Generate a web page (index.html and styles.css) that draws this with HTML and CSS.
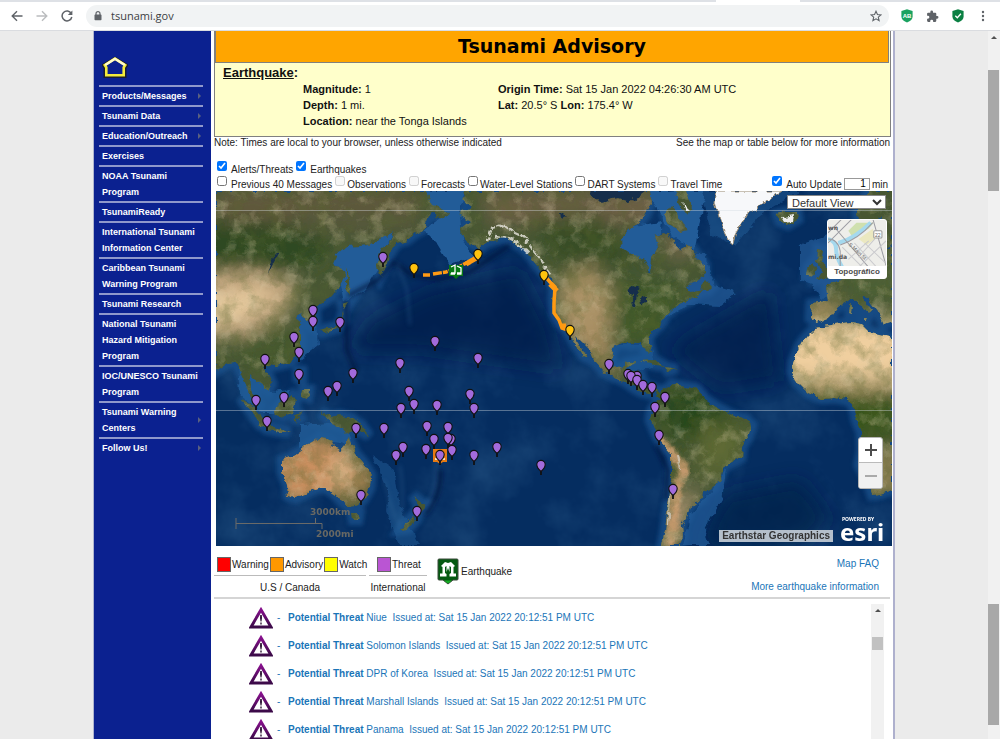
FILE: index.html
```html
<!DOCTYPE html>
<html lang="en">
<head>
<meta charset="utf-8">
<title>Tsunami.gov</title>
<link rel="stylesheet" href="styles.css">
</head>
<body>
<header class="chrome">
  <div class="tabstrip"><span class="tab"></span></div>
  <div class="toolbar">
    <button class="tool" aria-label="Back"><svg width="12" height="12" viewBox="0 0 12 12"><path d="M11.500 6H1.500M6 1.200L1.200 6L6 10.800" fill="none" stroke="#5f6368" stroke-width="1.400"/></svg></button>
    <button class="tool" aria-label="Forward"><svg width="12" height="12" viewBox="0 0 12 12"><path d="M.5 6H10.500M6 1.200L10.800 6L6 10.800" fill="none" stroke="#babcbe" stroke-width="1.400"/></svg></button>
    <button class="tool" aria-label="Reload"><svg width="12" height="12" viewBox="0 0 12 12"><path d="M10.300 3.600A4.900 4.900 0 1 0 10.800 7" fill="none" stroke="#5f6368" stroke-width="1.500"/><path d="M11.400 .4V5H6.800z" fill="#5f6368"/></svg></button>
    <div class="address">
      <svg width="8" height="10" viewBox="0 0 8 10"><path d="M2 4V2.700a2 2 0 0 1 4 0V4" fill="none" stroke="#5f6368" stroke-width="1.200"/><rect x=".5" y="3.600" width="7" height="5.600" rx=".8" fill="#5f6368"/></svg>
      <input class="url" type="text" value="tsunami.gov" aria-label="Address">
      <button class="tool" aria-label="Bookmark"><svg width="12" height="12" viewBox="0 0 24 24"><path d="M12 2.500l2.900 6.600 7.100.6-5.400 4.700 1.600 7L12 17.700 5.800 21.400l1.600-7L2 9.700l7.100-.6z" fill="none" stroke="#5f6368" stroke-width="2.200"/></svg></button>
    </div>
    <div class="extensions">
      <button class="tool" aria-label="AdBlock"><svg width="12" height="14" viewBox="0 0 12 14"><path d="M6 .3L11.600 2V7.500Q11.600 11.300 6 13.500Q.4 11.300.4 7.500V2z" fill="#1aa260"/><text x="6" y="8.500" text-anchor="middle" class="ab">AB</text></svg></button>
      <button class="tool" aria-label="Extensions"><svg width="13" height="13" viewBox="0 0 24 24"><path d="M20.500 11H19V7a2 2 0 0 0-2-2h-4V3.500a2.500 2.500 0 0 0-5 0V5H4a2 2 0 0 0-2 2v3.800h1.500a2.700 2.700 0 0 1 0 5.400H2V20a2 2 0 0 0 2 2h3.800v-1.500a2.700 2.700 0 0 1 5.400 0V22H17a2 2 0 0 0 2-2v-4h1.500a2.500 2.500 0 0 0 0-5z" fill="#5f6368"/></svg></button>
      <button class="tool" aria-label="Protection"><svg width="12" height="14" viewBox="0 0 12 14"><path d="M6 .3L11.600 2V7.500Q11.600 11.300 6 13.500Q.4 11.300.4 7.500V2z" fill="#0b8043"/><path d="M3.300 6.700L5.300 8.700L8.900 4.700" fill="none" stroke="#fff" stroke-width="1.300"/></svg></button>
      <button class="tool" aria-label="Menu"><svg width="4" height="12" viewBox="0 0 4 12"><g fill="#5f6368"><circle cx="2" cy="2" r="1.200"/><circle cx="2" cy="6" r="1.200"/><circle cx="2" cy="10" r="1.200"/></g></svg></button>
    </div>
  </div>
</header>
<div class="viewport">
  <div class="page">
    <nav class="sidebar">
      <a class="home" href="#" aria-label="Home"><svg width="26" height="22" viewBox="0 0 26 22"><path d="M13 3L24 9.500L22.500 12V20H3.500V12L2 9.500z" fill="none" stroke="#1b1f30" stroke-width="4"/><path d="M13 2.600L23.200 9.200L21.700 11.500V19.200H4.300V11.500L2.800 9.200z" fill="#0b2190" stroke="#f4ec3c" stroke-width="2.600"/><path d="M3.200 9L13 2.700L22.800 9" fill="none" stroke="#fffbd0" stroke-width="2.200"/></svg></a>
      <ul class="menu">
        <li><a class="sub" href="#">Products/Messages</a></li>
        <li><a class="sub" href="#">Tsunami Data</a></li>
        <li><a class="sub" href="#">Education/Outreach</a></li>
        <li><a href="#">Exercises</a></li>
        <li><a href="#">NOAA Tsunami<br>Program</a></li>
        <li><a href="#">TsunamiReady</a></li>
        <li><a href="#">International Tsunami<br>Information Center</a></li>
        <li><a href="#">Caribbean Tsunami<br>Warning Program</a></li>
        <li><a href="#">Tsunami Research</a></li>
        <li><a href="#">National Tsunami<br>Hazard Mitigation<br>Program</a></li>
        <li><a href="#">IOC/UNESCO Tsunami<br>Program</a></li>
        <li><a class="sub" href="#">Tsunami Warning<br>Centers</a></li>
        <li><a class="sub" href="#">Follow Us!</a></li>
      </ul>
    </nav>
    <main class="main">
      <section class="advisory">
        <h1>Tsunami Advisory</h1>
        <div class="quake">
          <h2><u>Earthquake</u>:</h2>
          <div class="facts">
            <div><p><b>Magnitude:</b> 1</p><p><b>Depth:</b> 1 mi.</p><p><b>Location:</b> near the Tonga Islands</p></div>
            <div><p><b>Origin Time:</b> Sat 15 Jan 2022 04:26:30 AM UTC</p><p><b>Lat:</b> 20.5° S <b>Lon:</b> 175.4° W</p></div>
          </div>
        </div>
      </section>
      <div class="notes"><span>Note: Times are local to your browser, unless otherwise indicated</span><span>See the map or table below for more information</span></div>
      <form class="layers">
        <div class="row wide">
          <label><input type="checkbox" checked><span>Alerts/Threats</span></label>
          <label><input type="checkbox" checked><span>Earthquakes</span></label>
        </div>
        <div class="row">
          <label class="first"><input type="checkbox"><span>Previous 40 Messages</span></label>
          <label><input type="checkbox" disabled><span>Observations</span></label>
          <label><input type="checkbox" disabled><span>Forecasts</span></label>
          <label><input type="checkbox"><span>Water-Level Stations</span></label>
          <label><input type="checkbox"><span>DART Systems</span></label>
          <label><input type="checkbox" disabled><span>Travel Time</span></label>
          <div class="auto"><label class="first"><input type="checkbox" checked><span>Auto Update</span></label><input class="minutes" type="text" value="1" aria-label="Minutes"><span>min</span></div>
        </div>
      </form>
      <section class="map" aria-label="Threat map">
        <svg class="world" viewBox="216 191 676 355" preserveAspectRatio="xMidYMid slice">
          <defs>
            <filter id="b2" x="-20%" y="-20%" width="140%" height="140%"><feGaussianBlur stdDeviation="2"/></filter>
            <filter id="b9" x="-30%" y="-30%" width="160%" height="160%"><feGaussianBlur stdDeviation="9"/></filter>
            <filter id="rough" x="-5%" y="-5%" width="110%" height="110%"><feTurbulence type="fractalNoise" baseFrequency=".12" numOctaves="3" seed="4" result="n"/><feDisplacementMap in="SourceGraphic" in2="n" scale="7" xChannelSelector="R" yChannelSelector="G"/></filter>
            <filter id="grain" filterUnits="userSpaceOnUse" x="216" y="191" width="676" height="355"><feTurbulence type="fractalNoise" baseFrequency=".06" numOctaves="5" seed="9"/><feColorMatrix values="0 0 0 0 .1  0 0 0 0 .13  0 0 0 0 .03  2.6 0 0 0 -1.050"/></filter>
            <filter id="glint" filterUnits="userSpaceOnUse" x="216" y="191" width="676" height="355"><feTurbulence type="fractalNoise" baseFrequency=".07" numOctaves="5" seed="21"/><feColorMatrix values="0 0 0 0 .75  0 0 0 0 .64  0 0 0 0 .42  0 2.400 0 0 -1.150"/></filter>
            <filter id="swell" filterUnits="userSpaceOnUse" x="216" y="191" width="676" height="355"><feTurbulence type="fractalNoise" baseFrequency=".018" numOctaves="5" seed="3"/><feColorMatrix values="0 0 0 0 .14  0 0 0 0 .38  0 0 0 0 .62  1.800 0 0 0 -.78"/></filter>
            <path id="land" d="M216 191H425L432 203L441 209L450 213L446 220L436 217L430 212L428 220L424 229L416 233L407 240L397 243L390 253L386 265L380 277L376 266L380 250L390 241L394 232L385 236L375 244L360 246L345 247L337 254L333 264L342 268L345 275L340 285L332 296L322 303L315 308L316 320L310 325L306 318L300 312L296 319L303 322L298 328L301 335L301 346L296 357L288 363L276 366L266 365L264 370L269 377L272 384L268 391L262 385L255 380L250 375L251 388L257 400L251 398L246 386L240 372L236 362L228 363L216 371z
              M241 398L250 403L262 417L266 426L260 425L251 412z M267 426L282 429L290 432L280 432L267 429z M275 410L285 400L292 395L296 402L292 413L284 417L276 415z M295 413L302 410L298 414L303 422L298 418L296 424z M298 371L302 371L302 380L298 378z M303 390L309 390L308 397L302 395z M321 412L330 417L340 415L352 418L362 426L369 436L358 430L348 433L340 428L332 424z
              M319 331L328 328L338 326L342 318L343 311L344 320L338 328L322 333z M343 304L350 302L345 310z M346 268L349 282L350 296L346 289z
              M282 460L291 457L300 451L306 446L312 443L320 437L328 438L333 440L331 447L340 451L345 445L347 435L352 445L355 453L363 462L371 475L370 488L364 499L358 505L348 507L340 500L336 495L330 491L325 487L315 489L305 494L295 498L288 496L287 485L282 472z M352 514L359 514L358 520L353 520z M413 495L420 502L427 504L424 509L418 515L418 505z M413 515L416 520L408 529L400 530L404 524z
              M464 191L466 197L462 200L471 208L458 214L470 221L461 228L462 238L472 245L480 248L486 243L495 240L505 238L515 243L525 250L535 262L543 272L551 281L554 288L553 300L554 314L560 324L568 331L574 343L583 356L587 358L578 343L576 336L582 342L590 350L595 362L604 372L614 377L624 381L634 388L641 392L650 394L655 392L660 397L657 403L652 410L650 420L655 432L660 442L672 455L672 480L668 505L665 530L662 546H680L683 535L682 525L687 517L690 508L696 503L702 498L703 493L713 488L720 478L725 466L741 458L742 447L748 437L752 425L746 419L732 415L717 407L705 399L697 389L685 387L672 384L668 388L660 392L652 387L644 385L640 373L628 371L628 366L635 364L636 361L626 363L622 369L614 366L611 358L613 347L622 343L632 344L640 341L646 350L651 352L648 340L652 332L660 325L666 315L675 307L684 303L694 297L706 290L690 292L686 285L696 281L705 274L705 265L698 258L692 248L686 243L680 252L674 240L664 232L655 235L658 247L652 258L651 273L644 260L630 254L622 248L621 240L630 230L640 222L645 215L652 203L650 191z
              M665 215L672 205L678 214L688 230L680 232L668 225z M676 191H686L692 208L687 216L678 203z M699 289L706 280L712 287L708 291z
              M777 214L785 212L797 212L798 219L788 225L780 222z M808 268L812 263L817 268L813 276L807 275z M818 249L824 250L822 260L829 272L828 279L817 280L822 272L817 262z
              M870 191H892V248L880 252L880 240L886 225L880 216L872 228L868 240L866 225L858 220L857 212z M892 246L880 252L866 256L858 266L846 275L842 280L828 283L826 288L828 302L811 304L810 318L817 323L830 318L838 307L848 301L853 297L862 307L868 315L872 310L863 298L866 296L878 312L884 325L892 322z
              M892 337L880 334L870 332L862 324L850 322L830 325L816 327L806 337L800 345L793 362L792 372L796 381L808 393L822 399L835 398L846 400L853 404L856 420L861 432L862 450L859 465L867 480L872 495L880 494L892 490z M640 361L655 360L665 366L655 365z M666 367L677 369L668 371z M850 303L853 305L852 315L849 314z M862 317H868L866 321z"/>
            <clipPath id="dry"><use href="#land"/></clipPath>
            <g id="pin" stroke="#111"><path d="M0 3V10" stroke-width="1.800"/><path d="M0 6.500Q-4.200 3-4.200 -.4A4.200 4.200 0 0 1 4.200 -.4Q4.200 3 0 6.500z" stroke-width="1.100"/></g>
          </defs>
          <rect x="216" y="191" width="676" height="355" fill="#052d60"/>
          <rect x="216" y="191" width="676" height="355" filter="url(#swell)" opacity=".22"/>
          <g filter="url(#b9)" fill="#011f4a"><path d="M430 290L520 270L550 330L560 370L420 350L350 350L370 320z" opacity=".7"/><path d="M700 330L770 290L780 380L720 390L670 350z" opacity=".7"/><path d="M725 495L800 480L830 520L800 546H700z" opacity=".75"/></g>
          <use href="#land" fill="none" stroke="#1c5590" stroke-width="11" filter="url(#b2)" opacity=".7"/>
          <g filter="url(#rough)" fill="#225c98">
            <path d="M330 262L345 245L396 228L384 252L376 272L366 290L344 302L340 280z"/><path d="M424 191H466L460 212L462 240L475 257L450 265L436 242L424 230L440 218z"/><path d="M300 305L316 324L318 345L300 360L290 340z" opacity=".8"/><path d="M238 362L262 368L270 392L290 390L276 412L262 412L240 395z" opacity=".8"/><path d="M300 425L345 422L352 445L320 440L300 448z" opacity=".8"/><path d="M618 228L662 222L656 275L640 262L618 252z"/><path d="M664 255L705 255L715 285L738 292L720 306L690 304L655 325L670 300z" opacity=".7"/><path d="M645 191H705L695 250L670 235L655 205z"/><path d="M800 245L840 230L868 225L880 250L850 275L822 300L812 284L800 280z" opacity=".7"/><path d="M684 546L690 515L712 490L726 468L722 500L704 530L710 546z" opacity=".75"/><path d="M372 455L394 470L400 505L412 530L420 546H398L386 512L388 490z" opacity=".5"/><path d="M604 345H650L655 366L625 375L605 366z" opacity=".6"/><path d="M700 191H800L760 215L735 245L712 235z" opacity=".5"/>
          </g>
          <path d="M348 296L378 280L394 262L412 275L440 279L470 272L510 245M346 300L347 350L356 372M440 470Q442 495 425 515M656 445L668 470L666 500" fill="none" stroke="#00183c" stroke-width="4" filter="url(#b2)" opacity=".75"/>
          <path d="M397 262L407 290L410 325M384 480Q392 510 400 530M400 465Q405 500 400 525M436 460Q438 490 424 508" fill="none" stroke="#3a6fa0" stroke-width="2" filter="url(#b2)" opacity=".4"/>
          <g filter="url(#rough)">
            <use href="#land" fill="#465633"/>
            <g clip-path="url(#dry)">
              <g filter="url(#b9)">
                <ellipse cx="260" cy="244" rx="70" ry="30" fill="#2d4a22"/><path d="M216 190H420V222H216z" fill="#625a3c"/><path d="M190 275L255 270L300 285L285 315L245 335L190 340z" fill="#c8aa82"/><path d="M205 300L270 290L260 305L225 320H205z" fill="#ecd0a3"/><path d="M300 210H420V235H300z" fill="#54583a"/><path d="M240 335L300 325V370H240z" fill="#44592f"/>
                <path d="M480 191H660V225H490z" fill="#6c5f44"/><path d="M530 220L600 215L640 265L560 265z" fill="#394d28"/><path d="M560 280L590 265L612 290L610 345L580 350L558 320z" fill="#ab9266"/><path d="M615 280H680V345H615z" fill="#40582c"/><path d="M575 330L605 335L620 380L590 360z" fill="#a58a5e"/><path d="M660 230L700 240L690 262L665 255z" fill="#716649"/>
                <path d="M655 390L700 392L740 420L720 440L670 440z" fill="#27471a"/><path d="M700 425L745 425L735 465L700 480z" fill="#5f6b36"/><path d="M670 500L700 485L680 546H660z" fill="#aa9272"/>
                <path d="M275 440L340 440L375 480L345 495L290 505L270 480z" fill="#c98f5e"/><path d="M335 455L355 460L345 490L330 480z" fill="#dcb88a"/><path d="M355 495L375 480L365 515L340 510z" fill="#5d6638"/>
                <path d="M780 325L910 318V380H780z" fill="#f0cf9f"/><path d="M785 382H900V392H785z" fill="#b19a66"/><path d="M800 394H900V440H850z" fill="#39551f"/><path d="M860 450H900V495H860z" fill="#8d8053"/><path d="M805 300H840V325H805z" fill="#a08b5c"/><path d="M850 262H900V300H850z" fill="#4d6035"/>
              </g>
              <path d="M657 438L674 455L684 470L676 490L674 520L670 546" fill="none" stroke="#c59a6d" stroke-width="9" filter="url(#b2)"/><path d="M677 455L680 470M671 490L668 525" fill="none" stroke="#eee" stroke-width="2" opacity=".6"/>
              <rect x="216" y="191" width="676" height="355" filter="url(#grain)" opacity=".38"/>
              <rect x="216" y="191" width="676" height="355" filter="url(#glint)" opacity=".35"/>
            </g>
            <path d="M487 241L492 228L503 225L512 232L523 237L530 246L542 262L552 276M495 236L508 238L518 243L528 253" fill="none" stroke="#e8e6df" stroke-width="2.500" stroke-dasharray="5 1.500" opacity=".8"/>
            <path d="M716 191L714 202L718 216L722 228L728 240L733 244L736 232L745 216L757 208L775 196L782 191z" fill="#f7f8fa" stroke="#9a8a70" stroke-width="1"/><path d="M782 217L794 215L793 221L785 222zM683 203L690 210L686 212z" fill="#eee"/>
            <path d="M627 292L634 287L641 290L637 293L635 307L632 305L634 295zM640 297L646 296L646 302L641 303zM643 307L650 303M560 213L567 217L561 219zM590 191L600 202L618 198L630 202L645 191zM272 262L276 252L279 253L268 275z" fill="#132e4c"/>
          </g>
          <path d="M216 210.500H892M216 410.500H892" stroke="#d4dbe2" opacity=".4"/>
          <g fill="none" stroke="#ff9a13"><path d="M423 275H430M433 274L446 272L457 268L464 264L472 261L478 256" stroke-width="3.500" stroke-dasharray="9 1 5 1"/><path d="M466 264L478 257" stroke-width="5"/><path d="M544 275L550 282L555 287L554 303L554 313L559 320L562 328L568 330" stroke-width="3.500"/><path d="M550 284L557 291M561 326H566" stroke-width="5"/></g>
          <g transform="translate(449 264)"><path d="M0 1H14V12H10L7 15L4 12H0z" fill="#087914"/><path d="M2 3L6 1V9H2M8 2L12 4V9H8M1.500 10H6M8 10H12.500" fill="none" stroke="#fff" stroke-width="1.300"/></g>
          <g transform="translate(433 448)"><path d="M0 1H14V14H10L7 16L4 14H0z" fill="#e67b14"/><path d="M2 11H5M9 11H12" fill="none" stroke="#fff" stroke-width="1.500"/></g>
          <g fill="#a36bdc">
            <use href="#pin" x="383" y="257"/><use href="#pin" x="313" y="310"/><use href="#pin" x="313" y="321"/><use href="#pin" x="340" y="322"/><use href="#pin" x="294" y="337"/><use href="#pin" x="299" y="352"/><use href="#pin" x="265" y="359"/><use href="#pin" x="435" y="341"/><use href="#pin" x="400" y="363"/><use href="#pin" x="478" y="358"/><use href="#pin" x="299" y="374"/><use href="#pin" x="353" y="373"/><use href="#pin" x="337" y="386"/><use href="#pin" x="328" y="391"/><use href="#pin" x="256" y="400"/><use href="#pin" x="284" y="397"/><use href="#pin" x="267" y="421"/><use href="#pin" x="409" y="391"/><use href="#pin" x="414" y="404"/><use href="#pin" x="401" y="408"/><use href="#pin" x="437" y="405"/><use href="#pin" x="470" y="394"/><use href="#pin" x="474" y="408"/><use href="#pin" x="356" y="428"/><use href="#pin" x="384" y="428"/><use href="#pin" x="427" y="426"/><use href="#pin" x="448" y="427"/><use href="#pin" x="434" y="439"/><use href="#pin" x="451" y="439"/><use href="#pin" x="448" y="438"/><use href="#pin" x="403" y="447"/><use href="#pin" x="396" y="455"/><use href="#pin" x="426" y="449"/><use href="#pin" x="452" y="450"/><use href="#pin" x="440" y="455"/><use href="#pin" x="474" y="455"/><use href="#pin" x="497" y="447"/><use href="#pin" x="541" y="465"/><use href="#pin" x="361" y="495"/><use href="#pin" x="417" y="511"/><use href="#pin" x="609" y="364"/><use href="#pin" x="628" y="374"/><use href="#pin" x="637" y="376"/><use href="#pin" x="631" y="376"/><use href="#pin" x="637" y="380"/><use href="#pin" x="643" y="385"/><use href="#pin" x="652" y="387"/><use href="#pin" x="665" y="397"/><use href="#pin" x="655" y="407"/><use href="#pin" x="659" y="435"/><use href="#pin" x="673" y="489"/>
          </g>
          <g fill="#ffc20e"><use href="#pin" x="414" y="268"/><use href="#pin" x="478" y="254"/><use href="#pin" x="544" y="275"/><use href="#pin" x="570" y="330"/></g>
        </svg>
        <select class="view" aria-label="Map view"><option>Default View</option></select>
        <button class="basemap"><svg viewBox="0 0 57 48" preserveAspectRatio="xMidYMid slice"><rect width="57" height="48" fill="#eeeeea"/><path d="M20 12L28 4H45L40 10L24 18z" fill="#cfe0ae"/><path d="M30 20L44 10L46 20L38 26z" fill="#ebe8c0"/><path d="M0 20Q8 22 8 30T14 48M10 24Q26 20 42 4" fill="none" stroke="#a5d9ee" stroke-width="4"/><path d="M0 14L14 0M0 24L24 0M6 8L40 48M0 20Q10 20 12 32V48M12 26Q30 20 44 4M44 0L57 46" fill="none" stroke="#9c9ca3" stroke-width="1"/><path d="M14 28L34 48M26 24L48 48M30 48L57 22M36 24L57 44M20 40L40 22M46 20L30 38" fill="none" stroke="#cacacd" stroke-width="1"/><rect x="45" y="12" width="8" height="7" rx="1" fill="#fff" stroke="#999"/><text x="49" y="18" text-anchor="middle" class="street">22</text><text x="0" y="11" class="place">wn</text><text x="0" y="40" class="place">mi.da</text><text x="20" y="26" class="street" transform="rotate(43 20 26)">S Main St</text></svg><span>Topográfico</span></button>
        <div class="zoom"><button aria-label="Zoom in"><svg width="12" height="12"><path d="M6 0V12M0 6H12" stroke="#4c4c4c" stroke-width="2"/></svg></button><button class="out" aria-label="Zoom out"><svg width="12" height="12"><path d="M0 6H12" stroke="#aaa" stroke-width="2"/></svg></button></div>
        <div class="scale"><span>3000km</span><svg width="88" height="11" viewBox="0 0 88 11"><path d="M1 0V11M1 5.500H87V11M80.500 0V5" fill="none" stroke="#6a6a68"/></svg><span>2000mi</span></div>
        <div class="credit"><span class="source">Earthstar Geographics</span><a class="esri" href="#"><small>POWERED BY</small><span>esri</span></a></div>
      </section>
      <section class="legend">
        <div class="group">
          <div class="keys"><span class="key red">Warning</span><span class="key orange">Advisory</span><span class="key yellow">Watch</span></div>
          <p>U.S / Canada</p>
        </div>
        <div class="group intl">
          <div class="keys"><span class="key purple">Threat</span></div>
          <p>International</p>
        </div>
        <div class="eq"><svg width="22" height="27" viewBox="0 0 22 27"><path d="M2 1H20Q21 1 21 2V21Q21 22 20 22H16L11 26L6 22H2Q1 22 1 21V2Q1 1 2 1z" fill="#055a11" stroke="#3d4b3c"/><path d="M7 22.500H15L11 25.500z" fill="#14ad23"/><path d="M4 8L8 4L11 5L14 4L18 8L16.500 9V15.500H19V18.500H12.500V16L14 15V9L12.500 8V14L11 10L9.500 14V8L8 9V15L9.500 16V18.500H3V15.500H5.500V9z" fill="#fff"/></svg><span>Earthquake</span></div>
        <div class="links"><a href="#">Map FAQ</a><a href="#">More earthquake information</a></div>
      </section>
      <section class="threats">
        <svg class="defs" width="0" height="0"><defs><linearGradient id="pg" x2="0" y2="1"><stop offset="0" stop-color="#85108b"/><stop offset="1" stop-color="#3b0a48"/></linearGradient><symbol id="tri" viewBox="0 0 24 22"><path d="M12 2.800L22 20H2z" fill="#fff" stroke="url(#pg)" stroke-width="3"/><path d="M11.200 8H12.800L13 11L12.500 14.500H11.500L11 11zM11.300 15.600H12.700V17.400H11.300z" fill="#2d1434"/></symbol></defs></svg>
        <ul>
          <li><svg width="24" height="22"><use href="#tri"/></svg><a href="#"><i>-</i><b>Potential Threat</b> Niue &nbsp;Issued at: Sat 15 Jan 2022 20:12:51 PM UTC</a></li>
          <li><svg width="24" height="22"><use href="#tri"/></svg><a href="#"><i>-</i><b>Potential Threat</b> Solomon Islands &nbsp;Issued at: Sat 15 Jan 2022 20:12:51 PM UTC</a></li>
          <li><svg width="24" height="22"><use href="#tri"/></svg><a href="#"><i>-</i><b>Potential Threat</b> DPR of Korea &nbsp;Issued at: Sat 15 Jan 2022 20:12:51 PM UTC</a></li>
          <li><svg width="24" height="22"><use href="#tri"/></svg><a href="#"><i>-</i><b>Potential Threat</b> Marshall Islands &nbsp;Issued at: Sat 15 Jan 2022 20:12:51 PM UTC</a></li>
          <li><svg width="24" height="22"><use href="#tri"/></svg><a href="#"><i>-</i><b>Potential Threat</b> Panama &nbsp;Issued at: Sat 15 Jan 2022 20:12:51 PM UTC</a></li>
        </ul>
        <div class="listbar"><span class="up"></span><span class="thumb"></span></div>
      </section>
    </main>
  </div>
  <div class="pagebar"><span class="up"></span><span class="thumb"></span><span class="thumb second"></span></div>
</div>
</body>
</html>
```
FILE: styles.css
```css
* { box-sizing: border-box; margin: 0; padding: 0; }
body { height: 100vh; display: flex; flex-direction: column; overflow: hidden; background: #ebebeb; color: #222; font: 10px/12px "Liberation Sans", Arial, sans-serif; }
button { border: 0; background: none; font: inherit; }
ul { list-style: none; }
a { color: #1a75b8; text-decoration: none; }
svg { display: block; flex-shrink: 0; }

.chrome { flex: none; background: #fff; border-bottom: 1px solid #dadce0; }
.tabstrip { height: 2px; background: #dee1e6; display: flex; justify-content: flex-end; padding-right: 200px; }
.tab { width: 84px; background: #fff; }
.toolbar { display: flex; align-items: center; height: 28px; padding: 0 15px 0 11px; }
.toolbar > .tool { width: 25px; }
.tool { display: flex; align-items: center; }
.address { flex: 1; display: flex; align-items: center; height: 22px; margin-right: 12px; padding: 0 7px 0 8px; border-radius: 11px; background: #f1f3f4; }
.url { flex: 1; margin-left: 9px; border: 0; background: none; font: 11px/16px "Open Sans", sans-serif; color: #3c4043; }
.extensions { display: flex; align-items: center; gap: 13px; }
.extensions .tool:last-child { margin-left: 4px; }
.ab { font: bold 6px "Liberation Sans", sans-serif; fill: #fff; }

.viewport { flex: 1; min-height: 0; display: flex; }
.page { display: flex; width: 100%; max-width: 802px; margin: 0 auto; background: #fff; border-left: 1px solid #aeb4cf; border-right: 2px solid #aeb0cd; }
.sidebar { flex: none; width: 117px; padding: 25px 8px 0 5px; background: #0b2190; }
.home { display: block; height: 29px; padding-left: 3px; }
.menu li { border-top: 2px solid #8f98cb; padding: 1px 0; }
.menu a { display: block; position: relative; padding-left: 3px; color: #fff; font-size: 9px; font-weight: bold; line-height: 16px; white-space: nowrap; }
.sub::after { content: ""; position: absolute; right: 2px; top: calc(50% - 3px); border: 3px solid transparent; border-left-color: #5a6080; border-right: 0; }

.main { flex: 1; min-width: 0; display: flex; flex-direction: column; padding-left: 3px; }
.advisory { margin-right: 2px; background: #ffffcb; border: 1px solid #808080; border-top: 0; }
.advisory h1 { height: 32px; margin-right: 1px; background: #ffa500; border: 1px solid #808080; border-top: 0; text-align: center; color: #000; font: bold 19px/30px "DejaVu Sans", Verdana, sans-serif; }
.quake { height: 73px; padding: 2px 8px; color: #111; }
.quake h2 { font-size: 13px; line-height: 16px; }
.facts { display: grid; grid-template-columns: 195px 1fr; padding-left: 80px; font-size: 11px; line-height: 16px; white-space: nowrap; }
.notes { display: flex; justify-content: space-between; padding-right: 3px; }
.layers { padding: 11px 5px 0 3px; white-space: nowrap; }
.row { display: flex; align-items: center; gap: 3px; height: 15px; }
.row label { display: flex; gap: 2px; }
.row.wide { gap: 3px; }
.row .first, .wide label { gap: 4px; }
.row span { padding-top: 4px; line-height: 12px; }
.row input[type="checkbox"] { width: 10px; height: 10px; margin: 1px 0 0; }
.auto { display: flex; gap: 2px; margin-left: auto; }
.minutes { width: 26px; height: 12px; margin-top: 3px; padding-right: 3px; border: 1px solid #999; text-align: right; font: 10px "Liberation Sans", sans-serif; }

.map { position: relative; margin: 1px 1px 0 2px; aspect-ratio: 676 / 355; }
.world { width: 100%; height: 100%; }
.view { position: absolute; top: 4px; right: 6px; width: 99px; height: 14px; border: 1px solid #888; background: #fff; color: #333; font: 11px "Liberation Sans", sans-serif; }
.basemap { position: absolute; top: 28px; right: 5px; width: 60px; border: 1px solid #fff; border-radius: 3px; background: #fff; overflow: hidden; }
.basemap svg { width: 100%; height: 46px; }
.basemap span { display: block; font: bold 8px/12px "Liberation Sans", sans-serif; color: #4c4c4c; }
.street { font: 5px "Liberation Sans", sans-serif; fill: #666; }
.place { font: bold 6px "DejaVu Sans", sans-serif; fill: #555; }
.zoom { position: absolute; right: 9px; bottom: 57px; width: 25px; border: 1px solid #b5b5b5; border-radius: 3px; overflow: hidden; background: #fff; }
.zoom button { display: flex; align-items: center; justify-content: center; width: 100%; height: 24px; }
.zoom .out { height: 26px; border-top: 1px solid #bbb; background: #f1f1f1; }
.scale { position: absolute; left: 19px; bottom: 6px; width: 120px; display: flex; flex-direction: column; color: #686863; font: bold 9px/11px "DejaVu Sans", Verdana, sans-serif; }
.scale span { padding-left: 75px; }
.scale span:last-child { padding-left: 81px; }
.credit { position: absolute; right: 6px; bottom: 4px; display: flex; align-items: flex-end; gap: 7px; }
.source { padding: 0 3px; background: #b4bfcb; color: #333; font-weight: bold; line-height: 12px; }
.esri { display: flex; flex-direction: column; width: 46px; color: #fff; font: bold 24px/20px "Noto Sans", sans-serif; }
.esri small { font-size: 5px; line-height: 6px; padding-left: 2px; }

.legend { display: flex; height: 53px; padding-right: 11px; margin-right: 3px; border-bottom: 2px solid #d5d5d5; white-space: nowrap; }
.group { text-align: center; width: 152px; }
.group p { border-top: 1px solid #bbb; padding-top: 6px; }
.group.intl { width: 58px; margin-left: 3px; }
.keys { display: flex; gap: 1px; height: 29px; align-items: center; padding: 8px 0 0 3px; }
.intl .keys { padding-left: 8px; }
.key { display: flex; align-items: center; gap: 1px; }
.key::before { content: ""; width: 12px; height: 13px; border: 1px solid #666; background: var(--c); }
.red { --c: #f00; }
.orange { --c: #ff9800; }
.yellow { --c: #ff0; }
.purple { --c: #ba55d3; }
.eq { display: flex; align-items: center; gap: 2px; margin-left: 10px; }
.links { display: flex; flex-direction: column; align-items: flex-end; gap: 11px; margin-left: auto; padding-top: 12px; }

.threats { flex: 1; min-height: 0; display: flex; margin-top: 5px; }
.threats ul { flex: 1; }
.threats li { display: flex; align-items: center; gap: 4px; height: 28px; padding-left: 35px; white-space: nowrap; }
.threats i { display: inline-block; width: 11px; font-style: normal; }
.defs { position: absolute; }
.listbar { width: 13px; margin-right: 9px; background: #f1f1f1; }
.up { display: block; width: 0; margin: 5px auto 0; border: 3px solid transparent; border-bottom-color: #505050; border-top: 0; }
.listbar .thumb { display: block; height: 13px; margin: 25px 1px 0; background: #c1c1c1; }
.pagebar { flex: none; width: 12px; background: #f1f1f1; }
.pagebar .thumb { display: block; height: 121px; margin: 31px 1px 0 0; background: #a8a8a8; }
.pagebar .second { margin-top: 413px; }
```
